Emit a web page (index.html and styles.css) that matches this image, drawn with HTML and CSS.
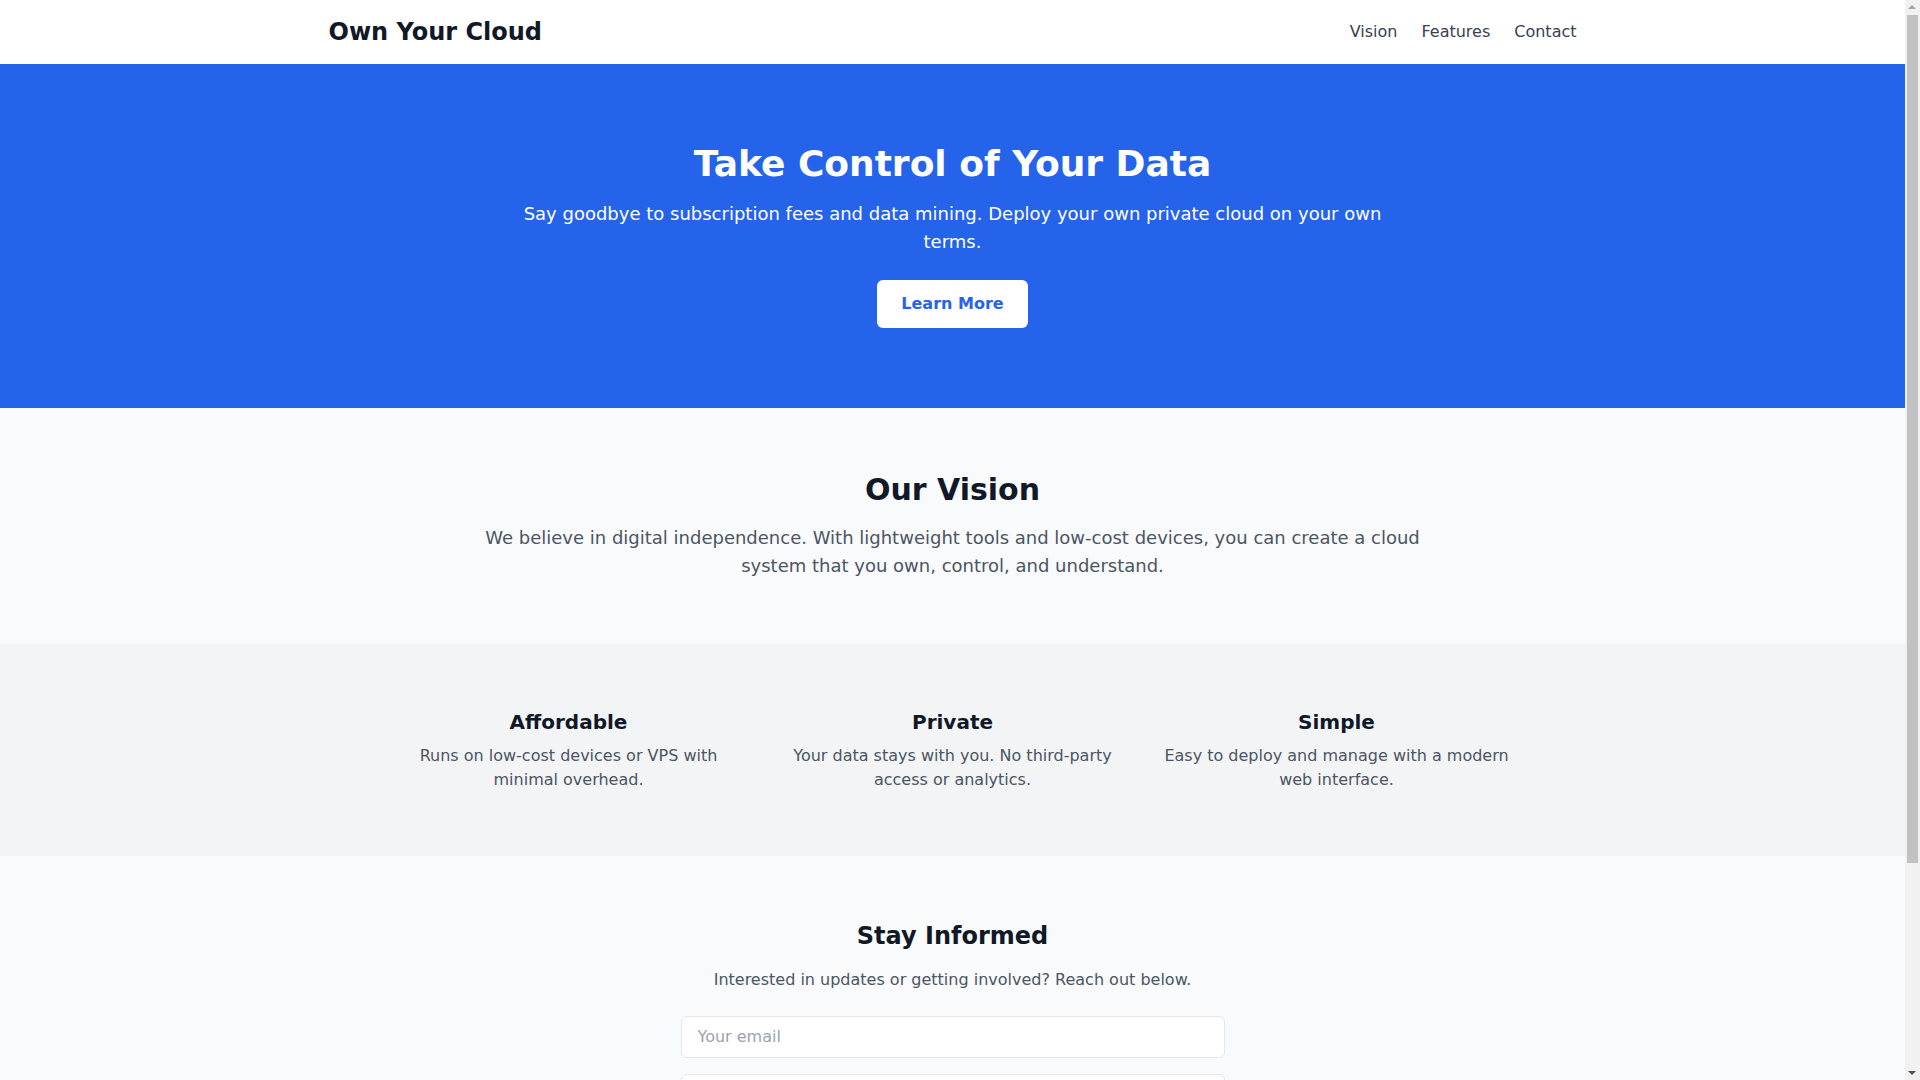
FILE: index.html
```html
<!DOCTYPE html>
<html lang="en">
<head>
<meta charset="utf-8">
<title>Own Your Cloud</title>
<link rel="stylesheet" href="styles.css">
</head>
<body>
<header class="site-header">
  <div class="container nav-bar">
    <a class="logo" href="#">Own Your Cloud</a>
    <nav class="nav-links">
      <a href="#vision">Vision</a>
      <a href="#features">Features</a>
      <a href="#contact">Contact</a>
    </nav>
  </div>
</header>

<section class="hero">
  <div class="hero-inner">
    <h1 class="hero-title">Take Control of Your Data</h1>
    <p class="hero-text">Say goodbye to subscription fees and data mining. Deploy your own private cloud on your own terms.</p>
    <a class="btn-light" href="#vision">Learn More</a>
  </div>
</section>

<section class="vision" id="vision">
  <div class="vision-inner">
    <h2 class="section-title">Our Vision</h2>
    <p class="vision-text">We believe in digital independence. With lightweight tools and low-cost devices, you can create a cloud system that you own, control, and understand.</p>
  </div>
</section>

<section class="features" id="features">
  <div class="features-grid">
    <div class="feature">
      <h3 class="feature-title">Affordable</h3>
      <p class="feature-text">Runs on low-cost devices or VPS with minimal overhead.</p>
    </div>
    <div class="feature">
      <h3 class="feature-title">Private</h3>
      <p class="feature-text">Your data stays with you. No third-party access or analytics.</p>
    </div>
    <div class="feature">
      <h3 class="feature-title">Simple</h3>
      <p class="feature-text">Easy to deploy and manage with a modern web interface.</p>
    </div>
  </div>
</section>

<section class="contact" id="contact">
  <div class="contact-inner">
    <h2 class="contact-title">Stay Informed</h2>
    <p class="contact-text">Interested in updates or getting involved? Reach out below.</p>
    <form class="contact-form">
      <input class="field" type="email" placeholder="Your email">
      <textarea class="field field-area" rows="5" placeholder="Your message"></textarea>
      <button class="btn-primary" type="button">Send</button>
    </form>
  </div>
</section>

<div class="scrollbar" aria-hidden="true">
  <span class="scroll-arrow scroll-up"></span>
  <span class="scroll-thumb"></span>
  <span class="scroll-arrow scroll-down"></span>
</div>
</body>
</html>
```

FILE: styles.css
```css
* {
  box-sizing: border-box;
}

html, body {
  margin: 0;
  padding: 0;
}

body {
  font-family: "DejaVu Sans", "Liberation Sans", sans-serif;
  color: #111827;
  background: #f9fafb;
  line-height: 1.5;
  margin-right: 15px;
}

h1, h2, h3, p {
  margin: 0;
}

a {
  text-decoration: none;
  color: inherit;
}

.container {
  max-width: 1280px;
  margin: 0 auto;
  padding: 0 16px;
}

.site-header {
  background: #ffffff;
}

.nav-bar {
  display: flex;
  align-items: center;
  justify-content: space-between;
  padding-top: 16px;
  padding-bottom: 16px;
}

.logo {
  font-size: 24px;
  line-height: 32px;
  font-weight: 700;
  color: #111827;
}

.nav-links {
  display: flex;
  gap: 24px;
  font-size: 16px;
  line-height: 24px;
}

.nav-links a {
  color: #374151;
}

.hero {
  background: #2563eb;
  color: #ffffff;
  padding: 80px 16px;
}

.hero-inner {
  max-width: 896px;
  margin: 0 auto;
  text-align: center;
}

.hero-title {
  font-size: 36px;
  line-height: 40px;
  font-weight: 700;
  margin-bottom: 16px;
}

.hero-text {
  font-size: 18px;
  line-height: 28px;
  margin-bottom: 24px;
}

.btn-light {
  display: inline-block;
  background: #ffffff;
  color: #2563eb;
  font-weight: 700;
  font-size: 16px;
  line-height: 24px;
  padding: 12px 24px;
  border-radius: 6px;
}

.vision {
  background: #f9fafb;
  padding: 64px 16px;
}

.vision-inner {
  max-width: 992px;
  margin: 0 auto;
  text-align: center;
}

.section-title {
  font-size: 30px;
  line-height: 36px;
  font-weight: 700;
  color: #111827;
  margin-bottom: 16px;
}

.vision-text {
  font-size: 18px;
  line-height: 28px;
  color: #4b5563;
}

.features {
  background: #f3f4f6;
  padding: 64px 16px;
}

.features-grid {
  max-width: 1120px;
  margin: 0 auto;
  display: grid;
  grid-template-columns: repeat(3, 1fr);
  gap: 32px;
  text-align: center;
}

.feature-title {
  font-size: 20px;
  line-height: 28px;
  font-weight: 600;
  color: #111827;
  margin-bottom: 8px;
}

.feature-text {
  font-size: 16px;
  line-height: 24px;
  color: #4b5563;
}

.contact {
  background: #f9fafb;
  padding: 64px 16px;
}

.contact-inner {
  max-width: 544px;
  margin: 0 auto;
  text-align: center;
}

.contact-title {
  font-size: 24px;
  line-height: 32px;
  font-weight: 700;
  color: #111827;
  margin-bottom: 16px;
}

.contact-text {
  font-size: 16px;
  line-height: 24px;
  color: #4b5563;
  margin-bottom: 24px;
}

.contact-form {
  display: flex;
  flex-direction: column;
  gap: 16px;
}

.field {
  display: block;
  width: 100%;
  font-family: inherit;
  font-size: 16px;
  line-height: 24px;
  padding: 8px 16px;
  border: 1px solid #e5e7eb;
  border-radius: 6px;
  background: #ffffff;
  color: #111827;
  resize: none;
}

.field::placeholder {
  color: #9ca3af;
}

.btn-primary {
  align-self: stretch;
  font-family: inherit;
  font-size: 16px;
  line-height: 24px;
  font-weight: 600;
  padding: 8px 16px;
  border: none;
  border-radius: 6px;
  background: #2563eb;
  color: #ffffff;
}

/* browser scrollbar gutter, as shown in the reference capture */
.scrollbar {
  position: fixed;
  top: 0;
  right: 0;
  width: 15px;
  height: 100vh;
  background: #f1f1f1;
}

.scroll-thumb {
  position: absolute;
  top: 15px;
  left: 2px;
  width: 11px;
  height: 848px;
  background: #c1c1c1;
}

.scroll-arrow {
  position: absolute;
  left: 3px;
  width: 0;
  height: 0;
  border-left: 4.5px solid transparent;
  border-right: 4.5px solid transparent;
}

.scroll-up {
  top: 5px;
  border-bottom: 4px solid #a3a3a3;
}

.scroll-down {
  bottom: 5px;
  border-top: 4px solid #505050;
}
```
